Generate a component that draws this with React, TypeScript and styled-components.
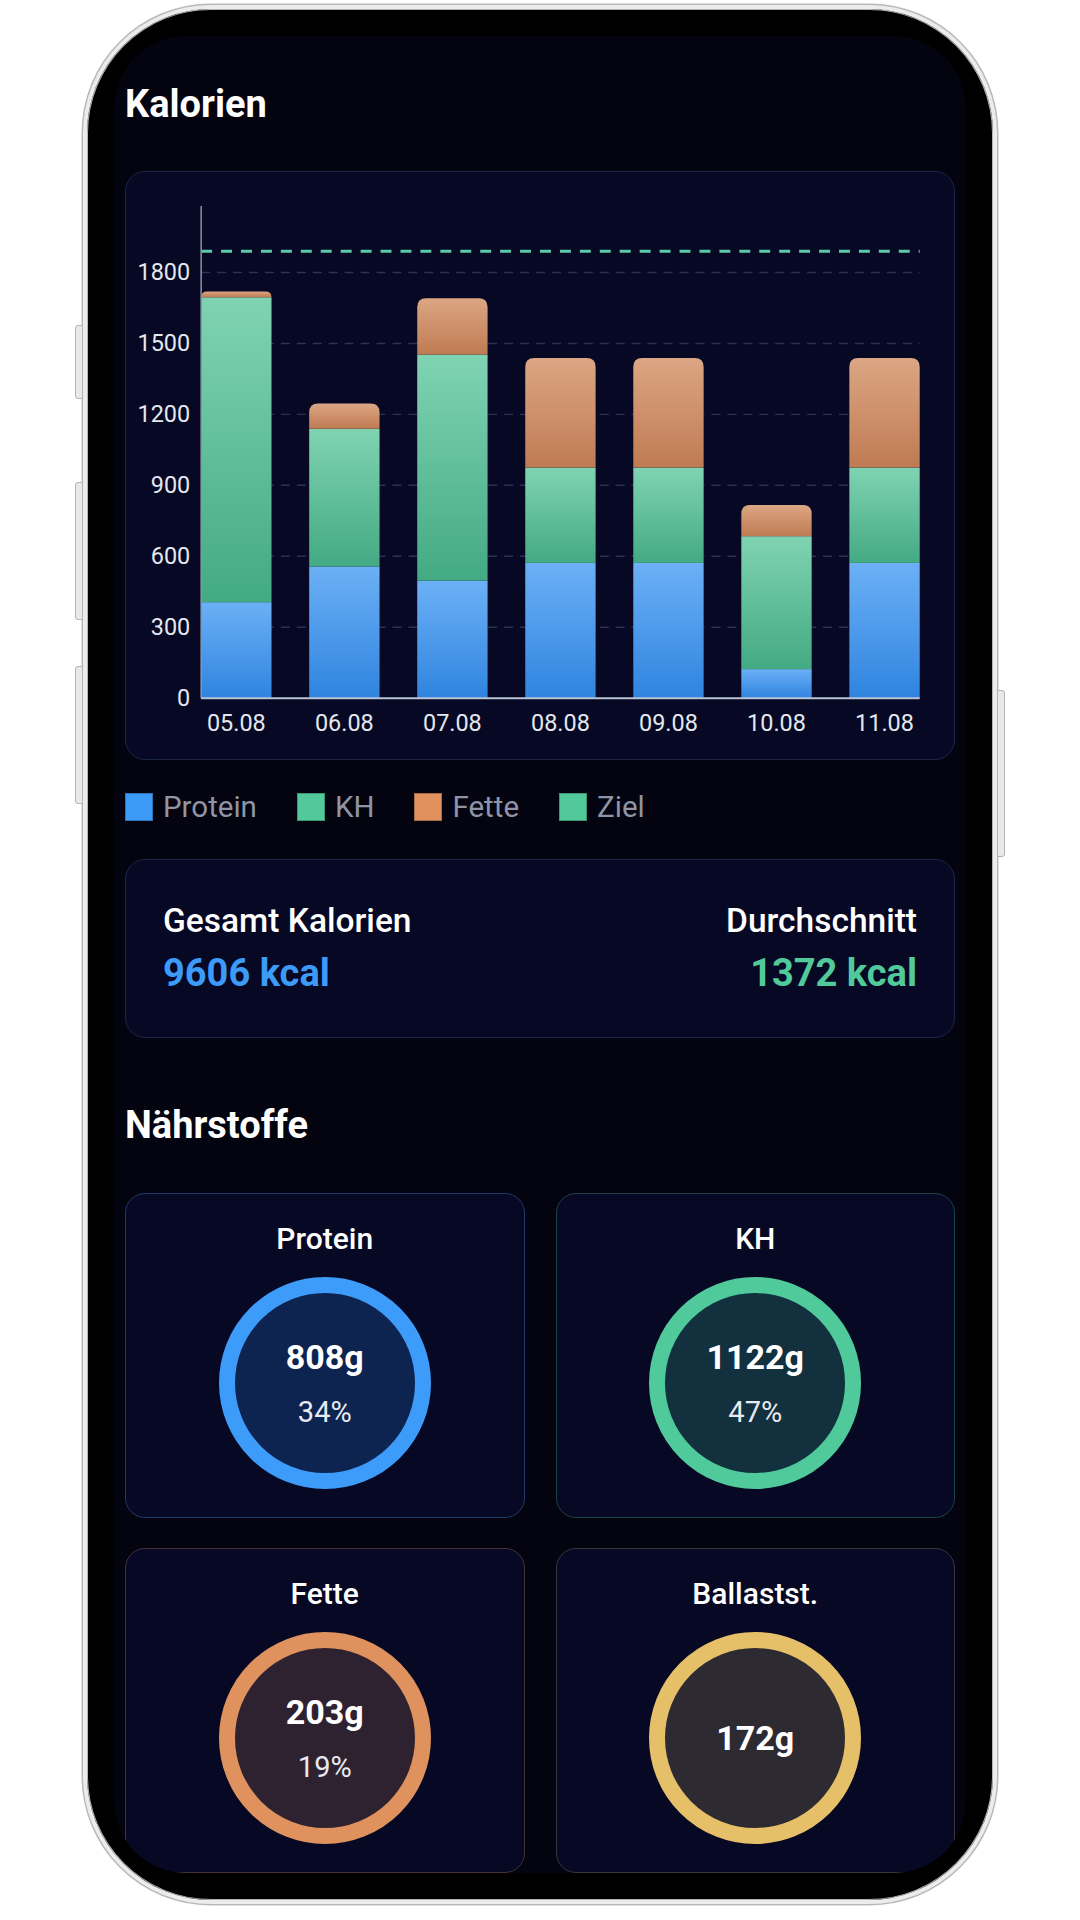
import styled, { createGlobalStyle } from 'styled-components';

const GlobalStyle = createGlobalStyle`
  html, body {
    margin: 0;
    padding: 0;
    background: #ffffff;
  }
  * {
    box-sizing: border-box;
  }
  body {
    font-family: Roboto, "Noto Sans", "Liberation Sans", sans-serif;
  }
`;

const Page = styled.div`
  width: 1080px;
  height: 1920px;
  display: flex;
  justify-content: center;
  padding-top: 5px;
  background: #ffffff;
  overflow: hidden;
`;

const Phone = styled.div`
  position: relative;
  width: 914px;
  height: 1899px;
  padding: 27px;
  background: #000000;
  border: 4px solid #ececec;
  border-radius: 128px;
  box-shadow: 0 0 0 1.5px #b9b9b9, inset 0 0 0 1px #b4b4b4;
`;

const SideButton = styled.div<{ $side: 'left' | 'right'; $top: number; $height: number }>`
  position: absolute;
  ${props => (props.$side === 'left' ? 'left: -12px;' : 'right: -12px;')}
  top: ${props => props.$top}px;
  width: 8px;
  height: ${props => props.$height}px;
  background: #e9e9e9;
  border: 1px solid #b3b3b3;
  border-radius: ${props => (props.$side === 'left' ? '3px 0 0 3px' : '0 3px 3px 0')};
`;

const Screen = styled.div`
  width: 100%;
  height: 100%;
  border-radius: 72px;
  overflow: hidden;
  background: #03040f;
  padding: 45px 11px 0 11px;
`;

const SectionTitle = styled.h2<{ $gapTop?: number }>`
  margin: ${props => props.$gapTop ?? 0}px 0 0 0;
  font-size: 38px;
  line-height: 46px;
  font-weight: 700;
  color: #ffffff;
`;

const Card = styled.div`
  background: #060824;
  border: 1.5px solid #1b2648;
  border-radius: 20px;
`;

const ChartCard = styled(Card)`
  margin-top: 44px;
  height: 589px;
  overflow: hidden;
`;

const Legend = styled.div`
  display: flex;
  align-items: center;
  gap: 40px;
  margin-top: 30px;
  height: 34px;
`;

const LegendItem = styled.div`
  display: flex;
  align-items: center;
  gap: 10px;
  font-size: 29.5px;
  color: #8f95a6;
`;

const LegendSwatch = styled.span<{ $color: string }>`
  width: 28px;
  height: 28px;
  background: ${props => props.$color};
  border: 1px solid rgba(0, 0, 0, 0.25);
`;

const StatsCard = styled(Card)`
  margin-top: 35px;
  height: 179px;
  display: flex;
  align-items: center;
  justify-content: space-between;
  padding: 0 37px;
`;

const StatBlock = styled.div<{ $align: 'left' | 'right' }>`
  display: flex;
  flex-direction: column;
  gap: 11px;
  text-align: ${props => props.$align};
`;

const StatLabel = styled.div`
  font-size: 33.5px;
  line-height: 38px;
  font-weight: 500;
  color: #ffffff;
`;

const StatValue = styled.div<{ $color: string }>`
  font-size: 38px;
  line-height: 44px;
  font-weight: 700;
  color: ${props => props.$color};
`;

const NutrientGrid = styled.div`
  margin-top: 45px;
  display: grid;
  grid-template-columns: 1fr 1fr;
  column-gap: 31px;
  row-gap: 30px;
`;

const NutrientCard = styled.div<{ $border: string }>`
  height: 325px;
  background: #060824;
  border: 1.5px solid ${props => props.$border};
  border-radius: 20px;
  display: flex;
  flex-direction: column;
  align-items: center;
  padding-top: 28px;
`;

const NutrientTitle = styled.div`
  font-size: 30px;
  line-height: 34px;
  font-weight: 500;
  color: #ffffff;
`;

const Ring = styled.div<{ $color: string; $fill: string }>`
  margin-top: 21px;
  width: 212px;
  height: 212px;
  border-radius: 50%;
  border: 16px solid ${props => props.$color};
  background: ${props => props.$fill};
  display: flex;
  flex-direction: column;
  align-items: center;
  justify-content: center;
  gap: 20px;
`;

const RingValue = styled.div`
  font-size: 34px;
  line-height: 38px;
  font-weight: 700;
  color: #ffffff;
`;

const RingPercent = styled.div`
  font-size: 29px;
  line-height: 32px;
  color: #e8eaf0;
`;

type Day = { label: string; protein: number; kh: number; fat: number };

const days: Day[] = [
  { label: '05.08', protein: 406, kh: 1289, fat: 25 },
  { label: '06.08', protein: 557, kh: 582, fat: 107 },
  { label: '07.08', protein: 497, kh: 956, fat: 238 },
  { label: '08.08', protein: 572, kh: 403, fat: 463 },
  { label: '09.08', protein: 572, kh: 403, fat: 463 },
  { label: '10.08', protein: 123, kh: 562, fat: 132 },
  { label: '11.08', protein: 572, kh: 403, fat: 463 },
];

const GOAL = 1890;

const CalorieChart = () => {
  const axisX = 75;
  const baseY = 528;
  const topY = 34;
  const plotRight = 796;
  const scale = 71.2 / 300;
  const barW = 70.6;
  const step = (plotRight - axisX - barW) / (days.length - 1);
  const ticks = [0, 300, 600, 900, 1200, 1500, 1800];
  const y = (v: number) => baseY - v * scale;

  const roundedTop = (x: number, yTop: number, yBottom: number, r: number) =>
    `M${x},${yBottom} V${yTop + r} Q${x},${yTop} ${x + r},${yTop} H${x + barW - r} Q${x + barW},${yTop} ${x + barW},${yTop + r} V${yBottom} Z`;

  return (
    <svg width="100%" height="100%" viewBox="0 0 830 589" style={{ display: 'block' }}>
      <defs>
        <linearGradient id="gProtein" x1="0" y1="0" x2="0" y2="1">
          <stop offset="0" stopColor="#6cb0f6" />
          <stop offset="1" stopColor="#2f84df" />
        </linearGradient>
        <linearGradient id="gKh" x1="0" y1="0" x2="0" y2="1">
          <stop offset="0" stopColor="#80d3b2" />
          <stop offset="1" stopColor="#43aa84" />
        </linearGradient>
        <linearGradient id="gFat" x1="0" y1="0" x2="0" y2="1">
          <stop offset="0" stopColor="#dca684" />
          <stop offset="1" stopColor="#bf7b52" />
        </linearGradient>
      </defs>

      {ticks.slice(1).map(t => (
        <line key={t} x1={axisX} x2={plotRight} y1={y(t)} y2={y(t)} stroke="#2a3152" strokeWidth={1.5} strokeDasharray="9 7" />
      ))}
      <line x1={axisX} x2={plotRight} y1={y(GOAL)} y2={y(GOAL)} stroke="#5ccaa8" strokeWidth={3} strokeDasharray="11 9" />

      {ticks.map(t => (
        <text key={t} x={64} y={y(t)} textAnchor="end" dominantBaseline="central" fontSize={23.5} fill="#e4e7ee" fontFamily="Roboto, sans-serif">
          {t}
        </text>
      ))}

      {days.map((d, i) => {
        const x = axisX + i * step;
        const pTop = y(d.protein);
        const kTop = y(d.protein + d.kh);
        const fTop = y(d.protein + d.kh + d.fat);
        const r = Math.min(9, kTop - fTop);
        return (
          <g key={d.label}>
            <rect x={x} y={pTop} width={barW} height={baseY - pTop} fill="url(#gProtein)" />
            <rect x={x} y={kTop} width={barW} height={pTop - kTop} fill="url(#gKh)" />
            <path d={roundedTop(x, fTop, kTop, r)} fill="url(#gFat)" />
            <text x={x + barW / 2} y={553} textAnchor="middle" dominantBaseline="central" fontSize={23.5} fill="#e4e7ee" fontFamily="Roboto, sans-serif">
              {d.label}
            </text>
          </g>
        );
      })}

      <line x1={axisX} x2={axisX} y1={topY} y2={baseY} stroke="#8d95a8" strokeWidth={1.5} />
      <line x1={axisX} x2={plotRight} y1={baseY} y2={baseY} stroke="#b9c3d6" strokeWidth={2} />
    </svg>
  );
};

const legend = [
  { label: 'Protein', color: '#3d9bf8' },
  { label: 'KH', color: '#52c99b' },
  { label: 'Fette', color: '#e0915d' },
  { label: 'Ziel', color: '#52c99b' },
];

const nutrients = [
  { title: 'Protein', value: '808g', percent: '34%', color: '#3d9cf9', fill: '#0d2350', border: '#1e3a6c' },
  { title: 'KH', value: '1122g', percent: '47%', color: '#50c99b', fill: '#12303d', border: '#1c4246' },
  { title: 'Fette', value: '203g', percent: '19%', color: '#e0925e', fill: '#2f2230', border: '#44303e' },
  { title: 'Ballastst.', value: '172g', percent: '', color: '#e6c068', fill: '#2e2a32', border: '#3a363f' },
];

export default function App() {
  return (
    <>
      <GlobalStyle />
      <Page>
        <Phone>
          <SideButton $side="left" $top={316} $height={74} />
          <SideButton $side="left" $top={473} $height={138} />
          <SideButton $side="left" $top={657} $height={138} />
          <SideButton $side="right" $top={681} $height={167} />
          <Screen>
            <SectionTitle>Kalorien</SectionTitle>
            <ChartCard>
              <CalorieChart />
            </ChartCard>

            <Legend>
              {legend.map(item => (
                <LegendItem key={item.label}>
                  <LegendSwatch $color={item.color} />
                  {item.label}
                </LegendItem>
              ))}
            </Legend>

            <StatsCard>
              <StatBlock $align="left">
                <StatLabel>Gesamt Kalorien</StatLabel>
                <StatValue $color="#3d9bf8">9606 kcal</StatValue>
              </StatBlock>
              <StatBlock $align="right">
                <StatLabel>Durchschnitt</StatLabel>
                <StatValue $color="#52c99b">1372 kcal</StatValue>
              </StatBlock>
            </StatsCard>

            <SectionTitle $gapTop={64}>Nährstoffe</SectionTitle>
            <NutrientGrid>
              {nutrients.map(n => (
                <NutrientCard key={n.title} $border={n.border}>
                  <NutrientTitle>{n.title}</NutrientTitle>
                  <Ring $color={n.color} $fill={n.fill}>
                    <RingValue>{n.value}</RingValue>
                    {n.percent && <RingPercent>{n.percent}</RingPercent>}
                  </Ring>
                </NutrientCard>
              ))}
            </NutrientGrid>
          </Screen>
        </Phone>
      </Page>
    </>
  );
}
